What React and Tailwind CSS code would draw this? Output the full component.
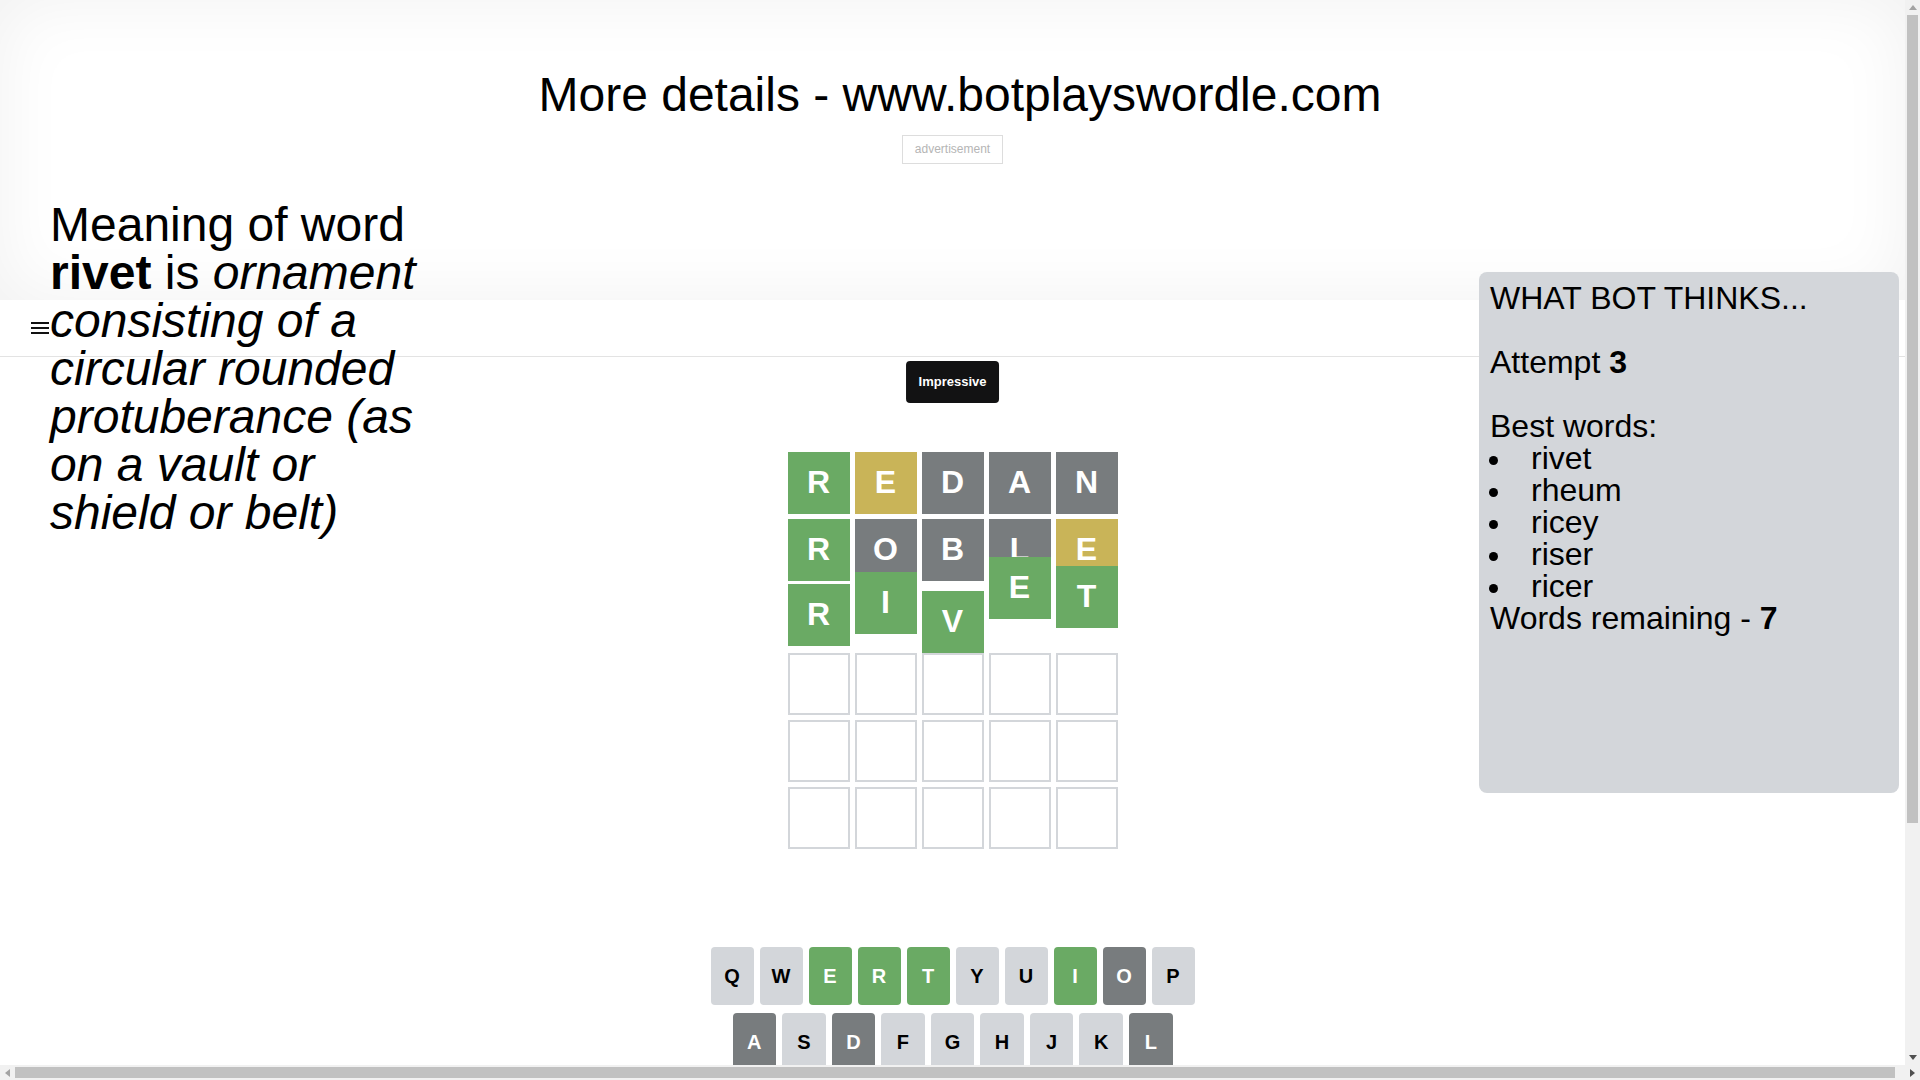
import React from 'react';

const fills = {
  g: 'bg-[#6aaa64] text-white',
  y: 'bg-[#c9b458] text-white',
  x: 'bg-[#787c7e] text-white',
  l: 'bg-[#d3d6da] text-black',
};

// rows of the board, third row is caught mid-animation
const board = [
  [['R', 'g'], ['E', 'y'], ['D', 'x'], ['A', 'x'], ['N', 'x']],
  [['R', 'g'], ['O', 'x'], ['B', 'x'], ['L', 'x'], ['E', 'y']],
  [
    ['R', 'g', '-translate-y-[2px]'],
    ['I', 'g', '-translate-y-[14px]'],
    ['V', 'g', 'translate-y-[5px]'],
    ['E', 'g', '-translate-y-[29px]'],
    ['T', 'g', '-translate-y-[20px]'],
  ],
];

const keys1 = [['Q', 'l'], ['W', 'l'], ['E', 'g'], ['R', 'g'], ['T', 'g'], ['Y', 'l'], ['U', 'l'], ['I', 'g'], ['O', 'x'], ['P', 'l']];
const keys2 = [['A', 'x'], ['S', 'l'], ['D', 'x'], ['F', 'l'], ['G', 'l'], ['H', 'l'], ['J', 'l'], ['K', 'l'], ['L', 'x']];
const keys3 = [['Z', 'l'], ['X', 'l'], ['C', 'l'], ['V', 'g'], ['B', 'x'], ['N', 'x'], ['M', 'l']];

const bestWords = ['rivet', 'rheum', 'ricey', 'riser', 'ricer'];

const Tile = ({ letter, state, shift }) => {
  if (!letter) {
    return <div className="h-[62px] w-[62px] border-2 border-[#d3d6da] bg-white" />;
  }
  return (
    <div className={`flex h-[62px] w-[62px] items-center justify-center pb-[3px] text-[32px] font-bold leading-none ${fills[state]} ${shift || ''}`}>
      {letter}
    </div>
  );
};

const Key = ({ label, state, wide }) => (
  <button className={`flex h-[58px] items-center justify-center rounded-[4px] font-bold ${wide ? 'flex-[1.5] text-[12px]' : 'flex-1 text-[20px]'} ${fills[state]}`}>
    {label}
  </button>
);

// little triangles of the browser scrollbars
const Arrow = ({ dir, color }) => {
  const pts = {
    up: '0,5 4,0 8,5',
    down: '0,0 8,0 4,5',
    left: '5,0 5,8 0,4',
    right: '0,0 0,8 5,4',
  };
  const vertical = dir === 'up' || dir === 'down';
  return (
    <svg width={vertical ? 8 : 5} height={vertical ? 5 : 8} viewBox={vertical ? '0 0 8 5' : '0 0 5 8'}>
      <polygon points={pts[dir]} fill={color} />
    </svg>
  );
};

const App = () => {
  const rows = [...board, [], [], []];

  return (
    <div className="flex h-[1080px] w-[1920px] flex-col overflow-hidden font-['Liberation_Sans',Arial,sans-serif] text-black">
      <div className="flex h-[1065px]">
        <div className="relative h-full w-[1905px] overflow-hidden bg-white">
          {/* header with the ad slot */}
          <div className="h-[300px] shadow-[inset_0_0_70px_rgba(0,0,0,0.06)]">
            <h1 className="pl-[15px] pt-[71px] text-center text-[48px] leading-none">More details - www.botplayswordle.com</h1>
            <div className="mt-[16px] flex justify-center">
              <div className="border border-[#dddddd] bg-white px-[12px] py-[6px] text-[12px] leading-[15px] text-[#b5b5b5]">advertisement</div>
            </div>
          </div>

          {/* game */}
          <div className="flex h-[57px] items-center border-b border-[#e3e3e3] bg-white pl-[31px]">
            <svg width="18" height="12" viewBox="0 0 18 12">
              <rect x="0" y="0" width="18" height="2" fill="#111" />
              <rect x="0" y="5" width="18" height="2" fill="#111" />
              <rect x="0" y="10" width="18" height="2" fill="#111" />
            </svg>
          </div>

          <div className="relative pt-[95px]">
            <div className="absolute left-1/2 top-[4px] z-20 flex h-[42px] -translate-x-1/2 items-center rounded-[4px] bg-[#121213] px-[13px] text-[13px] font-bold text-white">
              Impressive
            </div>

            <div className="mx-auto grid w-[330px] gap-[5px]">
              {rows.map((row, r) => (
                <div key={r} className="grid grid-cols-5 gap-[5px]">
                  {[0, 1, 2, 3, 4].map((c) => {
                    const t = row[c] || [];
                    return <Tile key={c} letter={t[0]} state={t[1]} shift={t[2]} />;
                  })}
                </div>
              ))}
            </div>

            <div className="mx-auto mt-[98px] w-[484px]">
              <div className="mb-[8px] flex gap-[6px]">
                {keys1.map(([k, s]) => <Key key={k} label={k} state={s} />)}
              </div>
              <div className="mb-[8px] flex gap-[6px] px-[22px]">
                {keys2.map(([k, s]) => <Key key={k} label={k} state={s} />)}
              </div>
              <div className="flex gap-[6px]">
                <Key label="ENTER" state="l" wide />
                {keys3.map(([k, s]) => <Key key={k} label={k} state={s} />)}
                <Key label="⌫" state="l" wide />
              </div>
            </div>
          </div>

          {/* word meaning, floats over header and nav */}
          <div className="absolute left-[50px] top-[201px] z-10 w-[380px] text-[48px] leading-none">
            Meaning of word <b>rivet</b> is <i>ornament consisting of a circular rounded protuberance (as on a vault or shield or belt)</i>
          </div>

          {/* bot panel */}
          <div className="absolute right-[6px] top-[272px] z-10 h-[521px] w-[420px] rounded-lg bg-[#d3d6da] px-[11px] pt-[10px] text-[32px] leading-[32px]">
            <div>WHAT BOT THINKS...</div>
            <div className="h-[32px]" />
            <div>Attempt <b>3</b></div>
            <div className="h-[32px]" />
            <div>Best words:</div>
            <ul>
              {bestWords.map((w) => (
                <li key={w} className="flex items-start">
                  <span className="ml-[-1px] mt-[14px] h-[9px] w-[9px] shrink-0 rounded-full bg-black" />
                  <span className="ml-[33px]">{w}</span>
                </li>
              ))}
            </ul>
            <div>Words remaining - <b>7</b></div>
          </div>
        </div>

        {/* vertical scrollbar */}
        <div className="flex w-[15px] flex-col bg-[#f1f1f1]">
          <div className="flex h-[15px] items-center justify-center"><Arrow dir="up" color="#a3a3a3" /></div>
          <div className="mx-[2px] h-[808px] bg-[#c1c1c1]" />
          <div className="flex-1" />
          <div className="flex h-[15px] items-center justify-center"><Arrow dir="down" color="#505050" /></div>
        </div>
      </div>

      {/* horizontal scrollbar */}
      <div className="flex h-[15px] bg-[#f1f1f1]">
        <div className="flex w-[15px] items-center justify-center"><Arrow dir="left" color="#a3a3a3" /></div>
        <div className="my-[2px] w-[1880px] bg-[#c1c1c1]" />
        <div className="flex-1" />
        <div className="flex w-[15px] items-center justify-center"><Arrow dir="right" color="#505050" /></div>
      </div>
    </div>
  );
};

export default App;
